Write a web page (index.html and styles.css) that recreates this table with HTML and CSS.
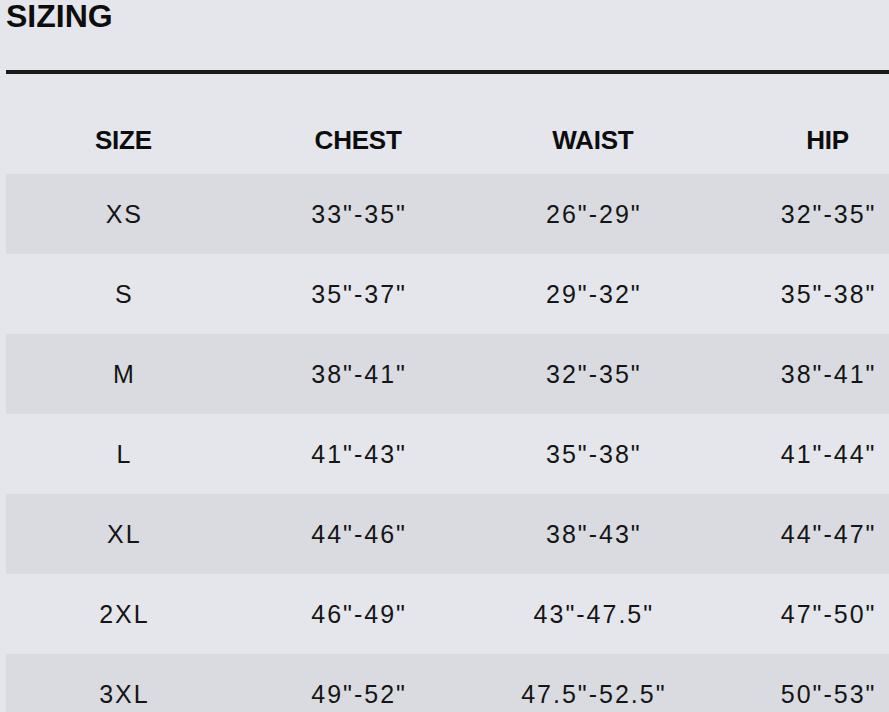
FILE: index.html
```html
<!DOCTYPE html>
<html lang="en">
<head>
<meta charset="utf-8">
<title>Sizing</title>
<link rel="stylesheet" href="styles.css">
</head>
<body>
<div class="page">
  <h1 class="title">SIZING</h1>
  <div class="rule"></div>
  <table class="sizes">
    <thead>
      <tr><th>SIZE</th><th>CHEST</th><th>WAIST</th><th>HIP</th></tr>
    </thead>
    <tbody>
      <tr><td>XS</td><td>33"-35"</td><td>26"-29"</td><td>32"-35"</td></tr>
      <tr><td>S</td><td>35"-37"</td><td>29"-32"</td><td>35"-38"</td></tr>
      <tr><td>M</td><td>38"-41"</td><td>32"-35"</td><td>38"-41"</td></tr>
      <tr><td>L</td><td>41"-43"</td><td>35"-38"</td><td>41"-44"</td></tr>
      <tr><td>XL</td><td>44"-46"</td><td>38"-43"</td><td>44"-47"</td></tr>
      <tr><td>2XL</td><td>46"-49"</td><td>43"-47.5"</td><td>47"-50"</td></tr>
      <tr><td>3XL</td><td>49"-52"</td><td>47.5"-52.5"</td><td>50"-53"</td></tr>
    </tbody>
  </table>
</div>
</body>
</html>
```

FILE: styles.css
```css
html, body {
  margin: 0;
  padding: 0;
  overflow: hidden;
  background: #e5e6eb;
}

body {
  font-family: "Liberation Sans", Arial, Helvetica, sans-serif;
  color: #111111;
}

.page {
  width: 939px;
  padding-left: 6px;
}

.title {
  margin: 0;
  font-size: 32px;
  line-height: 32px;
  font-weight: 700;
  color: #0d0d0d;
}

.rule {
  margin-top: 38px;
  height: 4px;
  background: #1a1a1a;
}

.sizes {
  width: 939px;
  margin-top: 32px;
  border-collapse: collapse;
  table-layout: fixed;
}

.sizes th {
  height: 68px;
  padding: 0;
  font-size: 26px;
  font-weight: 700;
  letter-spacing: -0.2px;
  text-align: center;
  vertical-align: middle;
  color: #0d0d0d;
}

.sizes td {
  height: 80px;
  padding: 0 0 0 2px;
  font-size: 25px;
  font-weight: 400;
  letter-spacing: 2px;
  text-align: center;
  vertical-align: middle;
  color: #151515;
}

.sizes tbody tr:nth-child(odd) {
  background: #dadbe0;
}
```
